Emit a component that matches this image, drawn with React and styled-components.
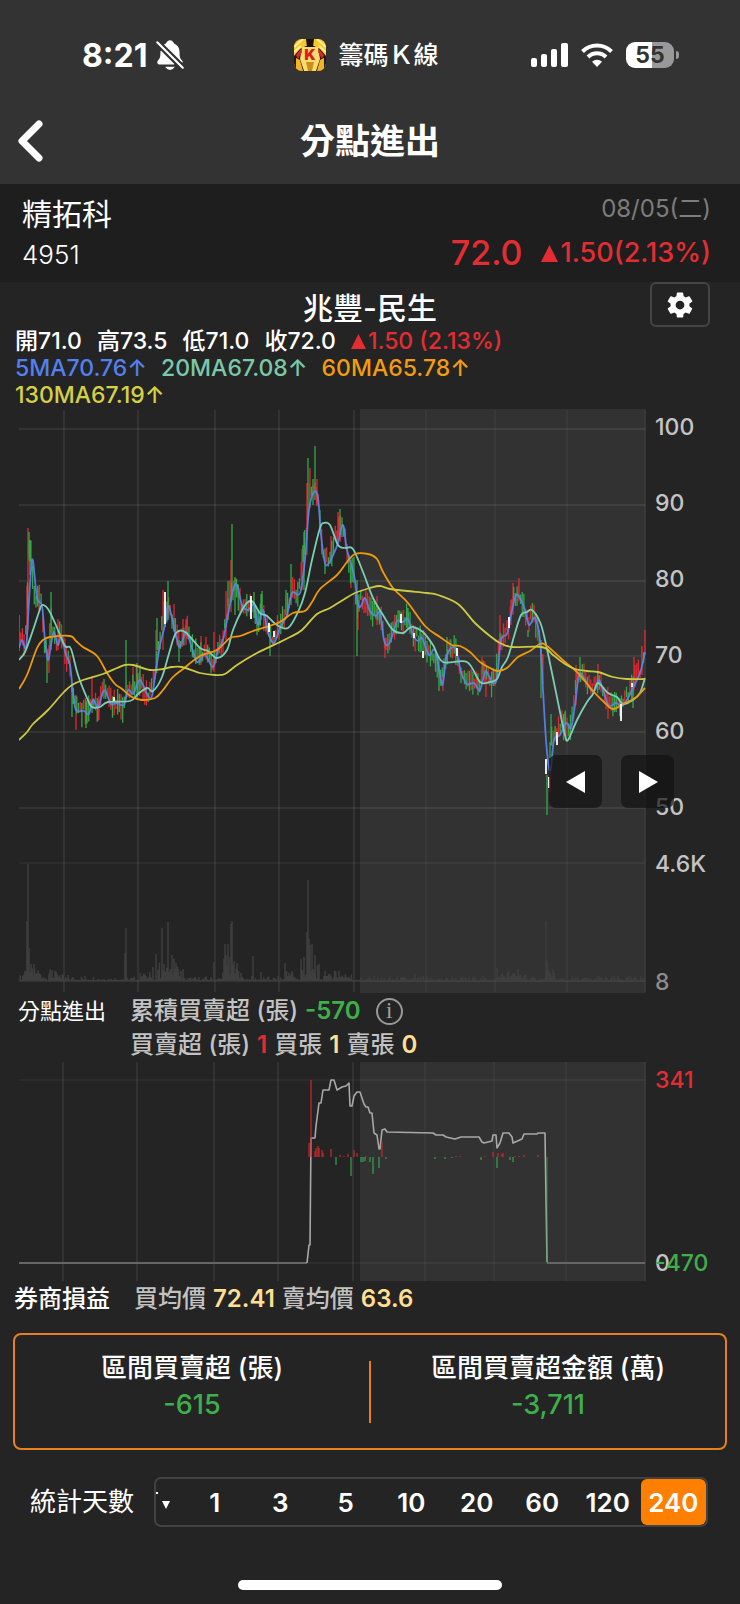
import React from 'react';
import styled, { createGlobalStyle } from 'styled-components';
import { IoNotificationsOff, IoSettingsSharp } from 'react-icons/io5';

const GlobalStyle = createGlobalStyle`
  * { box-sizing: border-box; }
  body {
    margin: 0;
    background: #242424;
    color: #fff;
    font-family: Inter, "Noto Sans CJK TC", sans-serif;
  }
  button { font: inherit; color: inherit; padding: 0; cursor: pointer; }
  h1, h2, p, dl, dt, dd { margin: 0; font-weight: inherit; }
`;

const red = '#e32d33';
const green = '#3fae4c';
const orange = '#ff7f00';
const sand = '#ffdf92';

/* ---------- header ---------- */

const Header = styled.header`
  background: #333;
  padding-bottom: 12px;
`;
const StatusBar = styled.div`
  display: grid;
  grid-template-columns: 1fr auto 1fr;
  align-items: center;
  height: 110px;
  padding: 0 61px 0 54px;
`;
const StatusGroup = styled.div`
  display: flex;
  align-items: center;
  justify-content: ${(p) => p.$justify || 'flex-start'};
  gap: ${(p) => p.$gap}px;
  padding-left: ${(p) => p.$indent || 0}px;
`;
const Clock = styled.time`
  font-size: 32px;
  font-weight: 700;
`;
const AppName = styled.span`
  font-size: 25px;
  font-weight: 500;
  line-height: 32px;
`;
const Battery = styled.span`
  display: flex;
  align-items: center;
  gap: 2px;
`;
const BatteryBody = styled.span`
  width: 48px;
  height: 26px;
  border-radius: 9px;
  background: linear-gradient(90deg, #fff 55%, #999 55%);
  color: #333;
  font-size: 23px;
  font-weight: 700;
  line-height: 26px;
  text-align: center;
`;
const BatteryTip = styled.span`
  width: 3px;
  height: 8px;
  border-radius: 0 3px 3px 0;
  background: #999;
`;
const NavBar = styled.nav`
  display: grid;
  grid-template-columns: 1fr auto 1fr;
  align-items: center;
  height: 62px;
  padding: 0 14px;
`;
const BackButton = styled.button`
  display: flex;
  width: 32px;
  border: 0;
  background: none;
`;
const Title = styled.h1`
  font-size: 35px;
  font-weight: 700;
  line-height: 48px;
`;

/* ---------- stock summary ---------- */

const Summary = styled.section`
  display: flex;
  justify-content: space-between;
  height: 98px;
  padding: 8px 29px 8px 22px;
  background: #1e1e1e;
`;
const SummaryColumn = styled.div`
  display: flex;
  flex-direction: column;
  justify-content: space-between;
  align-items: ${(p) => p.$align || 'flex-start'};
`;
const StockName = styled.h2`
  font-size: 30px;
  font-weight: 400;
  line-height: 44px;
`;
const StockCode = styled.p`
  font-size: 26px;
  font-weight: 300;
  line-height: 38px;
`;
const DateText = styled.time`
  color: #7c7c7c;
  font-size: 24px;
  line-height: 34px;
`;
const PriceRow = styled.p`
  display: flex;
  align-items: center;
  gap: 19px;
  color: ${red};
  font-size: 27px;
  font-weight: 500;
  line-height: 42px;
`;
const Price = styled.strong`
  font-size: 34px;
  font-weight: 500;
`;
const Change = styled.span`
  display: inline-flex;
  align-items: center;
  gap: 2px;
  color: ${red};
`;

/* ---------- quote ---------- */

const BrokerRow = styled.div`
  display: grid;
  grid-template-columns: 1fr auto 1fr;
  justify-items: end;
  height: 46px;
  padding: 0 30px;
`;
const BrokerName = styled.h2`
  grid-column: 2;
  font-size: 30px;
  font-weight: 500;
  line-height: 52px;
`;
const SettingsButton = styled.button`
  display: flex;
  align-items: center;
  justify-content: center;
  width: 60px;
  height: 45px;
  border: 2px solid #444;
  border-radius: 6px;
  background: none;
`;
const QuoteLine = styled.p`
  display: flex;
  flex-wrap: wrap;
  gap: 0 ${(p) => p.$gap}px;
  padding: 0 210px 0 15px;
  font-size: 23px;
  font-weight: 500;
  line-height: 27px;
`;
const QuoteItem = styled.span`
  height: 27px;
  color: ${(p) => p.$color || '#fff'};
`;

/* ---------- charts ---------- */

const ChartRow = styled.div`
  position: relative;
  display: grid;
  grid-template-columns: minmax(0, 1fr) 94px;
  padding-left: 19px;
`;
const Plot = styled.svg`
  display: block;
  width: 100%;
  height: ${(p) => p.$height}px;
`;
const Axis = styled.div`
  display: grid;
  grid-template-rows: ${(p) => p.$rows};
  padding: ${(p) => p.$top}px 0 0 9px;
  color: #c4c4c4;
  font-size: 23px;
  font-weight: 500;
  line-height: 24px;
`;
const Tick = styled.span`
  grid-column: 1;
  ${(p) => p.$row && `grid-row: ${p.$row};`}
  ${(p) => p.$color && `color: ${p.$color};`}
`;
const Pager = styled.div`
  position: absolute;
  top: 346px;
  right: 66px;
  display: flex;
  gap: 19px;
`;
const PagerButton = styled.button`
  display: flex;
  align-items: center;
  justify-content: center;
  width: 53px;
  height: 53px;
  border: 0;
  border-radius: 7px;
  background: rgba(18, 18, 18, 0.7);
`;

/* ---------- figures under the charts ---------- */

const Figures = styled.section`
  display: flex;
  gap: 24px;
  padding: ${(p) => p.$padding};
  line-height: 34px;
`;
const FigureLabel = styled.h2`
  height: 34px;
  font-size: ${(p) => p.$size}px;
  font-weight: ${(p) => p.$weight};
`;
const FigureLine = styled.p`
  display: flex;
  align-items: center;
  gap: 7px;
  height: 34px;
  color: #c2c2c2;
  font-size: 24px;
  font-weight: 500;
`;
const Value = styled.span`
  color: ${(p) => p.$color};
  font-weight: 600;
`;
const InfoButton = styled.button`
  width: 27px;
  height: 27px;
  margin-left: 8px;
  border: 2px solid #999;
  border-radius: 50%;
  background: none;
  color: #a0a0a0;
  font-family: "Liberation Serif", serif;
  font-size: 23px;
  line-height: 20px;
`;

const TotalsBox = styled.dl`
  display: grid;
  grid-template-columns: 1fr 2px 1fr;
  height: 117px;
  margin: 17px 13px 0;
  border: 2px solid #e9801f;
  border-radius: 8px;
`;
const Total = styled.div`
  padding-top: 14px;
  text-align: center;
  font-weight: 500;
  line-height: 37px;
`;
const TotalLabel = styled.dt`
  height: 37px;
  font-size: 26px;
`;
const TotalValue = styled.dd`
  color: ${green};
  font-size: 27px;
`;
const Divider = styled.span`
  height: 62px;
  margin-top: 26px;
  background: #e9801f;
`;

const DaysRow = styled.div`
  display: flex;
  align-items: center;
  gap: 20px;
  padding: 27px 32px 0 30px;
`;
const DaysLabel = styled.span`
  font-size: 26px;
  line-height: 38px;
  white-space: nowrap;
`;
const DaysStrip = styled.div`
  display: flex;
  flex: 1;
  height: 50px;
  overflow: hidden;
  border: 2px solid #424242;
  border-radius: 7px;
`;
const DayButton = styled.button`
  flex: 1;
  border: 0;
  border-radius: ${(p) => (p.$active ? 6 : 0)}px;
  background: ${(p) => (p.$active ? orange : 'none')};
  font-size: 26px;
  font-weight: 600;
`;
const CustomDays = styled.button`
  display: flex;
  width: 26px;
  border: 0;
  background: none;
`;
const HomeIndicator = styled.div`
  width: 264px;
  height: 10px;
  margin: 53px auto 15px;
  border-radius: 5px;
  background: #fff;
`;

/* ---------- chart data, in plot units ---------- */

const candleColors = { r: '#dd2a30', g: '#33a847' };

// x, middle of the day range
const priceTrack = [
  [19, 645], [22, 636], [25, 648], [27, 615], [29, 560], [31, 555], [34, 590], [37, 600], [41, 602],
  [44, 640], [48, 660], [51, 625], [54, 635], [57, 645], [60, 635], [66, 655], [70, 668], [73, 700],
  [78, 712], [84, 710], [88, 716], [92, 702], [98, 708], [103, 688], [106, 692], [110, 703], [117, 702],
  [123, 706], [128, 685], [133, 688], [137, 680], [142, 685], [147, 696], [152, 690], [155, 670],
  [158, 650], [164, 615], [168, 608], [172, 618], [177, 640], [181, 643], [186, 630], [192, 645],
  [198, 660], [205, 650], [213, 662], [218, 650], [223, 640], [227, 612], [232, 585], [236, 588],
  [242, 605], [247, 610], [253, 607], [257, 625], [262, 608], [267, 628], [272, 645], [279, 628],
  [285, 612], [292, 590], [298, 592], [302, 565], [306, 535], [309, 490], [314, 488], [318, 500],
  [321, 535], [325, 562], [329, 558], [333, 545], [338, 530], [342, 530], [347, 550], [350, 575],
  [354, 575], [357, 612], [361, 598], [367, 604], [371, 612], [376, 614], [380, 613], [384, 640],
  [388, 645], [393, 630], [398, 620], [403, 620], [408, 618], [413, 635], [418, 638], [424, 645],
  [430, 652], [436, 660], [441, 680], [445, 660], [450, 650], [456, 650], [462, 675], [467, 685],
  [474, 682], [479, 689], [482, 668], [487, 675], [492, 682], [496, 678], [499, 640], [504, 635],
  [508, 628], [513, 598], [519, 590], [524, 608], [528, 622], [532, 615], [536, 622], [540, 640],
  [543, 670],
];
const reboundTrack = [
  [550, 750], [553, 735], [557, 735], [562, 724], [567, 728], [571, 722], [575, 690], [579, 672],
  [584, 675], [590, 687], [596, 678], [600, 680], [605, 695], [610, 703], [616, 704], [621, 705],
  [626, 696], [632, 686], [637, 676], [641, 668], [645, 650],
];

// days that stand out from the track: x, high, low, color
const wicks = [
  [19, 615, 650, 'g'], [27, 586, 640, 'r'], [28, 528, 630, 'r'], [29, 532, 554, 'g'], [30, 540, 575, 'g'],
  [39, 587, 610, 'r'], [47, 650, 683, 'g'], [49, 645, 673, 'r'], [51, 592, 650, 'g'], [58, 619, 650, 'r'],
  [72, 690, 717, 'g'], [76, 695, 730, 'r'], [86, 700, 728, 'g'], [92, 676, 705, 'r'], [98, 700, 721, 'r'],
  [126, 640, 690, 'g'], [133, 667, 695, 'r'], [137, 663, 700, 'g'], [140, 665, 690, 'g'],
  [156, 630, 672, 'r'], [157, 618, 650, 'g'], [163, 590, 650, 'r'], [168, 581, 620, 'g'],
  [174, 604, 630, 'r'], [179, 640, 662, 'g'], [183, 619, 645, 'r'], [186, 619, 645, 'r'], [201, 636, 665, 'r'],
  [214, 632, 672, 'r'], [226, 591, 640, 'r'], [228, 581, 620, 'g'], [231, 560, 612, 'r'],
  [232, 524, 600, 'g'], [235, 577, 615, 'g'], [254, 592, 618, 'g'], [261, 594, 620, 'g'],
  [270, 635, 656, 'g'], [286, 590, 615, 'g'], [291, 564, 605, 'g'], [302, 549, 590, 'r'],
  [304, 532, 590, 'g'], [307, 483, 555, 'r'], [308, 458, 512, 'g'], [310, 468, 508, 'r'],
  [313, 479, 505, 'g'], [315, 446, 500, 'g'], [317, 479, 505, 'r'], [325, 550, 574, 'g'],
  [331, 536, 560, 'r'], [338, 512, 540, 'r'], [340, 509, 535, 'g'], [351, 560, 588, 'r'],
  [357, 580, 656, 'g'], [358, 600, 630, 'r'], [377, 596, 625, 'r'], [385, 638, 658, 'r'],
  [408, 608, 630, 'g'], [439, 670, 691, 'g'], [447, 637, 660, 'g'], [443, 672, 691, 'r'],
  [482, 657, 680, 'r'], [486, 670, 697, 'r'], [500, 615, 650, 'r'], [511, 600, 625, 'r'],
  [513, 583, 615, 'r'], [519, 578, 600, 'r'], [528, 630, 637, 'g'], [541, 640, 698, 'g'],
  [543, 655, 684, 'r'], [547, 775, 815, 'g'], [550, 765, 792, 'r'], [551, 714, 745, 'g'],
  [565, 712, 735, 'g'], [576, 665, 705, 'r'], [580, 657, 680, 'g'], [598, 664, 685, 'r'],
  [608, 700, 719, 'r'], [634, 657, 690, 'r'], [642, 646, 675, 'r'], [645, 630, 655, 'r'],
  [633, 690, 708, 'g'],
];
const flatDays = [
  [165, 592, 624], [251, 596, 619], [269, 623, 632], [274, 631, 637], [401, 614, 623], [414, 633, 638],
  [423, 651, 658], [457, 648, 656], [509, 617, 628], [546, 759, 774], [549, 777, 788], [557, 732, 745],
  [621, 704, 721], [632, 683, 687], [114, 697, 701],
];

const ma5 = '19,648 22,640 26,648 28,618 31,570 33,561 37,598 42,606 45,640 48,660 51,645 54,632 58,645 61,636 66,655 70,665 73,692 76,710 84,711 89,714 93,700 98,707 103,692 106,692 111,704 117,703 124,705 128,690 133,694 137,685 140,680 144,687 148,696 152,696 156,670 160,645 165,625 168,606 172,618 176,636 180,647 186,632 191,645 197,662 205,655 213,667 218,650 223,640 228,615 233,590 237,585 242,605 248,610 254,605 258,625 263,610 268,632 274,643 280,628 287,615 292,593 300,593 305,560 309,510 314,492 318,498 321,535 325,563 329,563 334,553 338,543 343,525 347,550 354,575 358,604 361,606 365,598 370,611 376,616 380,613 384,640 388,645 393,634 397,621 403,622 408,619 413,635 418,641 422,638 429,655 435,650 441,680 443,683 447,655 455,648 461,672 467,684 474,683 480,690 485,672 489,676 493,683 497,678 501,640 507,634 511,615 516,595 521,600 525,610 529,625 535,618 540,640 543,690 546,740 549,768 551,768 554,740 560,735 566,723 571,728 575,705 579,675 584,678 591,690 595,690 599,680 604,693 609,706 616,703 622,706 628,698 632,690 636,682 641,670 645,652';
const ma20 = '19,660 25,652 32,633 39,612 42,605 48,609 55,623 63,642 66,647 71,649 78,675 87,698 92,707 100,707 108,702 130,701 138,694 147,688 153,691 162,677 170,650 176,633 185,632 200,648 208,651 217,658 227,650 233,630 242,610 248,602 253,602 260,613 267,616 277,625 288,628 298,612 305,593 312,560 320,528 324,523 330,525 338,545 345,548 353,549 363,572 373,598 383,615 393,630 403,633 408,629 413,627 423,632 433,645 443,662 467,662 480,682 490,682 497,679 502,667 508,657 515,633 521,615 527,612 532,610 540,622 545,640 552,673 560,712 565,735 568,740 577,720 587,702 593,694 598,683 608,693 617,697 623,704 633,700 640,693 645,678';
const ma60 = '19,689 27,675 37,648 43,640 50,637 70,636 76,641 83,647 97,656 107,673 115,684 122,689 132,697 142,700 155,698 163,690 172,678 183,669 200,656 217,650 230,638 240,636 253,631 266,627 280,622 293,613 305,611 312,602 320,589 337,575 347,562 355,554 368,554 377,559 383,572 393,588 408,603 425,626 440,637 452,645 460,646 470,652 480,662 490,668 498,671 507,668 518,657 530,651 540,644 547,646 565,662 578,673 593,691 605,703 613,709 623,704 635,698 645,688';
const ma130 = '19,740 27,732 33,724 48,710 63,693 72,685 83,680 103,674 117,668 125,665 133,665 150,670 163,669 172,667 182,667 200,673 215,675 225,674 237,665 257,653 278,643 290,637 302,630 317,614 330,608 343,600 355,593 370,588 380,586 390,589 407,591 427,593 438,595 458,604 475,623 490,636 500,643 512,647 542,647 553,655 565,664 575,669 587,671 598,672 613,677 627,679 645,679';

const volumeSpikes = [
  [27, 60], [28, 117], [29, 33], [31, 17], [34, 17], [50, 12], [52, 11], [125, 28], [126, 53], [153, 14],
  [156, 27], [162, 53], [164, 17], [168, 59], [172, 26], [174, 22], [176, 18], [183, 12], [214, 19],
  [224, 22], [225, 37], [226, 26], [228, 37], [229, 24], [231, 57], [232, 60], [234, 20], [237, 18],
  [253, 25], [261, 9], [285, 18], [292, 10], [301, 22], [304, 24], [307, 49], [308, 101], [309, 42],
  [310, 36], [312, 37], [315, 26], [318, 16], [339, 10], [415, 7], [497, 13], [514, 8], [518, 12],
  [546, 60], [547, 20], [549, 10], [598, 5], [641, 5],
];
const busyDays = [[22, 42, 9], [48, 60, 6], [140, 152, 6], [158, 182, 13], [222, 242, 12], [286, 294, 8], [300, 320, 14], [325, 352, 6], [498, 526, 6], [545, 555, 7]];

const netLine = '307,1262 309,1244 310,1244 311,1137 315,1137 316,1125 319,1102 321,1102 323,1089 329,1089 331,1079 334,1079 337,1089 342,1086 346,1085 349,1082 350,1105 352,1105 354,1095 357,1091 360,1091 364,1103 366,1106 368,1106 370,1112 372,1112 374,1132 377,1134 379,1148 380,1148 382,1129 385,1128 387,1131 433,1132 436,1134 443,1134 446,1136 455,1138 461,1136 479,1136 482,1141 484,1142 492,1140 493,1134 496,1134 497,1147 500,1142 503,1132 509,1132 512,1136 513,1142 522,1138 524,1133 537,1133 538,1132 545,1132 547,1261';
// x, net lots drawn up or down from the zero line
const netBars = [
  [309, 14], [311, 77], [315, 6], [316, 9], [318, 11], [319, 9], [322, 7], [323, 4], [331, 8], [336, -8],
  [340, 2], [344, 1], [348, 3], [351, -19], [354, 7], [357, 4], [361, -5], [363, -5], [365, -4], [366, 1],
  [370, -5], [373, -17], [379, -11], [382, 15], [386, -2], [435, -2], [445, -2], [452, -1], [456, 1],
  [460, 1], [481, -3], [485, 1], [493, 5], [497, -11], [498, 4], [502, 3], [503, 4], [510, -3], [513, -5],
  [515, 1], [519, 1], [524, 2], [538, 2], [547, -106],
];

const gridX = [64, 138, 215, 279, 354, 426, 495, 567];
const gridY = [429, 505, 581, 656, 732, 808, 863];

const noise = (n) => {
  const v = Math.sin(n * 12.9898) * 43758.5453;
  return v - Math.floor(v);
};

const levelAt = (track, x) => {
  const i = track.findIndex(([px]) => px >= x);
  if (i <= 0) return track[0][1];
  const [x0, y0] = track[i - 1];
  const [x1, y1] = track[i];
  return y0 + ((y1 - y0) * (x - x0)) / (x1 - x0);
};

const makeCandles = (track) => {
  const candles = [];
  const end = track[track.length - 1][0];
  for (let x = track[0][0]; x <= end; x += 1.7) {
    const y = levelAt(track, x) + (noise(x) - 0.5) * 11;
    const half = 4 + noise(x + 7) * 10;
    candles.push([x, y - half, y + half * 0.9, noise(x + 3) > 0.47 ? 'g' : 'r']);
  }
  return candles;
};

const candles = [...makeCandles(priceTrack), ...makeCandles(reboundTrack), ...wicks];

const volumes = Array.from({ length: 522 }, (_, i) => {
  const x = 19 + i * 1.2;
  const busy = busyDays.find(([from, to]) => x >= from && x <= to);
  return [x, 1 + noise(i) ** 3 * (x < 110 || busy ? 6 : 4) + (busy ? noise(i + 5) * busy[2] : 0)];
});

const segments = (list) => list.map(([x, high, low]) => `M${x} ${high}V${low}`).join('');

// curve through the points, each tangent taken from the two neighbours
const smooth = (points) => {
  const p = points.split(' ').map((s) => s.split(',').map(Number));
  return p.slice(1).reduce((d, end, i) => {
    const before = p[i - 1] || p[i];
    const after = p[i + 2] || end;
    const c1 = [p[i][0] + (end[0] - before[0]) / 6, p[i][1] + (end[1] - before[1]) / 6];
    const c2 = [end[0] - (after[0] - p[i][0]) / 6, end[1] - (after[1] - p[i][1]) / 6];
    return `${d}C${c1} ${c2} ${end}`;
  }, `M${p[0]}`);
};

const PriceChart = () => (
  <Plot $height={584} viewBox="19 409 627 584" preserveAspectRatio="none" role="img" aria-label="K線圖">
    <rect x="360" y="409" width="286" height="584" fill="#323232" />
    <g stroke="#fff" strokeOpacity="0.07" strokeWidth="1.8">
      {gridX.map((x) => <line key={x} x1={x} x2={x} y1="410" y2="992" strokeOpacity={x > 360 ? 0.04 : 0.08} />)}
      {gridY.map((y) => <line key={y} x1="19" x2="645" y1={y} y2={y} strokeOpacity={y > 850 ? 0.04 : 0.07} />)}
      <line x1="645" x2="645" y1="410" y2="992" strokeOpacity="0.04" />
      <line x1="19" x2="645" y1="981" y2="981" />
    </g>
    <path
      d={[...volumes, ...volumeSpikes].map(([x, h]) => `M${x} 981V${981 - h}`).join('')}
      stroke="#3e3e3e"
      strokeWidth="1.5"
    />
    {Object.keys(candleColors).map((c) => (
      <path
        key={c}
        d={segments(candles.filter((d) => d[3] === c))}
        stroke={candleColors[c]}
        strokeWidth="1.3"
      />
    ))}
    <g fill="none" strokeWidth="1.8">
      <path d={smooth(ma5)} stroke="#5a86ee" strokeWidth="1.8" strokeOpacity="0.9" />
      <path d={smooth(ma20)} stroke="#7ccfb2" />
      <path d={smooth(ma60)} stroke="#ef9a0c" />
      <path d={smooth(ma130)} stroke="#ccc943" />
    </g>
    <path d={segments(flatDays)} stroke="#fff" strokeWidth="1.8" />
  </Plot>
);

const BrokerChart = () => (
  <Plot $height={220} viewBox="19 1061 627 220" preserveAspectRatio="none" role="img" aria-label="分點進出圖">
    <rect x="360" y="1061" width="286" height="219" fill="#323232" />
    <g stroke="#fff" strokeOpacity="0.07" strokeWidth="1.8">
      {gridX.map((x) => <line key={x} x1={x - 1} x2={x - 1} y1="1061" y2="1280" strokeOpacity={x > 360 ? 0.04 : 0.08} />)}
      <line x1="645" x2="645" y1="1061" y2="1280" strokeOpacity="0.04" />
      <line x1="19" x2="645" y1="1079" y2="1079" strokeOpacity="0.04" />
      <line x1="19" x2="645" y1="1262" y2="1262" strokeOpacity="0.04" />
    </g>
    <path d="M19 1262H307M547 1262H645" stroke="#666" strokeWidth="2" />
    <polyline points={netLine} fill="none" stroke="#a8a8a8" strokeWidth="1.6" strokeLinejoin="round" />
    {netBars.map(([x, lots]) => (
      <path
        key={x}
        d={`M${x} 1156V${1156 - lots}`}
        stroke={lots > 0 ? '#d3272d' : '#3aa64a'}
        strokeOpacity={lots < -100 ? 0.6 : 0.9}
        strokeWidth="1.3"
      />
    ))}
  </Plot>
);

/* ---------- small drawings ---------- */

const AppIcon = () => (
  <svg width="32" height="32" viewBox="0 0 32 32" aria-hidden="true">
    <clipPath id="app-icon">
      <rect width="32" height="32" rx="8" />
    </clipPath>
    <g clipPath="url(#app-icon)">
      <rect width="32" height="32" fill="#f7c72c" />
      <path d="M0 8l9-8M32 8l-9-8M0 13l7-6M32 13l-7-6" stroke="#fff09a" strokeWidth="2" />
      <path d="M0 17l6-7 6-3h8l6 3 6 7v15H0z" fill="#2a1510" />
      <path d="M8 8h16l2 12-4 12H10L6 20z" fill="#f9dc6e" />
      <path d="M12 0h8l-1 8h-6z" fill="#17110f" />
      <path d="M7 10l-5 6 2 4 4-7zM25 10l5 6-2 4-4-7z" fill="#d8292a" />
      <path d="M2 19l4 2 3 11H2zM30 19l-4 2-3 11h7z" fill="#f0b528" />
      <path d="M12 23h8l-2 9h-4z" fill="#c98f18" />
      <text x="16" y="21" textAnchor="middle" fontSize="15" fontWeight="900" fill="#d91e22">K</text>
    </g>
  </svg>
);

const Signal = () => (
  <svg width="37" height="24" viewBox="0 0 37 24" fill="#fff" aria-hidden="true">
    <rect x="0" y="15" width="6" height="9" rx="2" />
    <rect x="10" y="11" width="6" height="13" rx="2" />
    <rect x="20" y="6" width="6" height="18" rx="2" />
    <rect x="30" y="0" width="7" height="24" rx="2" />
  </svg>
);

const Wifi = () => (
  <svg width="32" height="24" viewBox="0 0 32 24" aria-hidden="true">
    <g fill="none" stroke="#fff" strokeWidth="4">
      <path d="M1.5 8.5a20.5 20.5 0 0 1 29 0" />
      <path d="M7 14a12.7 12.7 0 0 1 18 0" />
    </g>
    <path d="M16 24l-5-5.2a7.2 7.2 0 0 1 10 0z" fill="#fff" />
  </svg>
);

const Triangle = ({ size = 17 }) => (
  <svg width={size} height={size} viewBox="0 0 16 16" aria-label="漲">
    <path d="M8 0l8 16H0z" fill="currentColor" />
  </svg>
);

const days = [1, 3, 5, 10, 20, 60, 120, 240];

const App = () => (
  <>
    <GlobalStyle />
    <Header>
      <StatusBar>
        <StatusGroup $gap={6} $indent={28}>
          <Clock>8:21</Clock>
          <IoNotificationsOff size={34} />
        </StatusGroup>
        <StatusGroup $gap={12}>
          <AppIcon />
          <AppName>籌碼Ｋ線</AppName>
        </StatusGroup>
        <StatusGroup $gap={13} $justify="flex-end">
          <Signal />
          <Wifi />
          <Battery>
            <BatteryBody>55</BatteryBody>
            <BatteryTip />
          </Battery>
        </StatusGroup>
      </StatusBar>
      <NavBar>
        <BackButton type="button" aria-label="返回">
          <svg width="32" height="44" viewBox="0 0 32 44" fill="none">
            <path d="M25 5L8 22l17 17" stroke="#fff" strokeWidth="7" strokeLinecap="round" strokeLinejoin="round" />
          </svg>
        </BackButton>
        <Title>分點進出</Title>
      </NavBar>
    </Header>

    <Summary>
      <SummaryColumn>
        <StockName>精拓科</StockName>
        <StockCode>4951</StockCode>
      </SummaryColumn>
      <SummaryColumn $align="flex-end">
        <DateText>08/05(二)</DateText>
        <PriceRow>
          <Price>72.0</Price>
          <Change><Triangle />1.50(2.13%)</Change>
        </PriceRow>
      </SummaryColumn>
    </Summary>

    <BrokerRow>
      <BrokerName>兆豐-民生</BrokerName>
      <SettingsButton type="button" aria-label="設定">
        <IoSettingsSharp size={28} />
      </SettingsButton>
    </BrokerRow>
    <QuoteLine $gap={15}>
      <QuoteItem>開71.0</QuoteItem>
      <QuoteItem>高73.5</QuoteItem>
      <QuoteItem>低71.0</QuoteItem>
      <QuoteItem>收72.0</QuoteItem>
      <Change><Triangle size={15} />1.50 (2.13%)</Change>
    </QuoteLine>
    <QuoteLine $gap={14}>
      <QuoteItem $color="#5480ee">5MA70.76↑</QuoteItem>
      <QuoteItem $color="#79c9aa">20MA67.08↑</QuoteItem>
      <QuoteItem $color="#f39c12">60MA65.78↑</QuoteItem>
      <QuoteItem $color="#d6d046">130MA67.19↑</QuoteItem>
    </QuoteLine>

    <ChartRow>
      <PriceChart />
      <Axis $rows="repeat(5, 76px) 57px 118px 24px" $top={6}>
        <Tick>100</Tick>
        <Tick>90</Tick>
        <Tick>80</Tick>
        <Tick>70</Tick>
        <Tick>60</Tick>
        <Tick>50</Tick>
        <Tick>4.6K</Tick>
        <Tick $color="#8c8c8c">8</Tick>
      </Axis>
      <Pager>
        <PagerButton type="button" aria-label="前一天">
          <svg width="20" height="24" viewBox="0 0 20 24"><path d="M0 12L19 1v22z" fill="#fff" /></svg>
        </PagerButton>
        <PagerButton type="button" aria-label="後一天">
          <svg width="20" height="24" viewBox="0 0 20 24"><path d="M20 12L1 1v22z" fill="#fff" /></svg>
        </PagerButton>
      </Pager>
    </ChartRow>

    <Figures $padding="0 18px">
      <FigureLabel $size={22} $weight={400}>分點進出</FigureLabel>
      <div>
        <FigureLine>
          累積買賣超 (張) <Value $color={green}>-570</Value>
          <InfoButton type="button" aria-label="說明">i</InfoButton>
        </FigureLine>
        <FigureLine>
          買賣超 (張) <Value $color={red}>1</Value>
          買張 <Value $color={sand}>1</Value>
          賣張 <Value $color={sand}>0</Value>
        </FigureLine>
      </div>
    </Figures>

    <ChartRow>
      <BrokerChart />
      <Axis $rows="183px 24px" $top={6}>
        <Tick $row={1} $color={red}>341</Tick>
        <Tick $row={2}>0</Tick>
        <Tick $row={2} $color={green}>-470</Tick>
      </Axis>
    </ChartRow>

    <Figures $padding="0 14px">
      <FigureLabel $size={24} $weight={500}>券商損益</FigureLabel>
      <FigureLine>
        買均價 <Value $color={sand}>72.41</Value>
        賣均價 <Value $color={sand}>63.6</Value>
      </FigureLine>
    </Figures>

    <TotalsBox>
      <Total>
        <TotalLabel>區間買賣超 (張)</TotalLabel>
        <TotalValue>-615</TotalValue>
      </Total>
      <Divider />
      <Total>
        <TotalLabel>區間買賣超金額 (萬)</TotalLabel>
        <TotalValue>-3,711</TotalValue>
      </Total>
    </TotalsBox>

    <DaysRow>
      <DaysLabel id="days">統計天數</DaysLabel>
      <DaysStrip role="group" aria-labelledby="days">
        <CustomDays type="button" aria-label="自訂天數">
          <svg width="20" height="46" viewBox="0 0 20 46">
            <path d="M6 22h8l-4 8zM0 13h2v2H0z" fill="#fff" />
          </svg>
        </CustomDays>
        {days.map((n) => (
          <DayButton key={n} type="button" $active={n === 240} aria-pressed={n === 240}>{n}</DayButton>
        ))}
      </DaysStrip>
    </DaysRow>
    <HomeIndicator />
  </>
);

export default App;
